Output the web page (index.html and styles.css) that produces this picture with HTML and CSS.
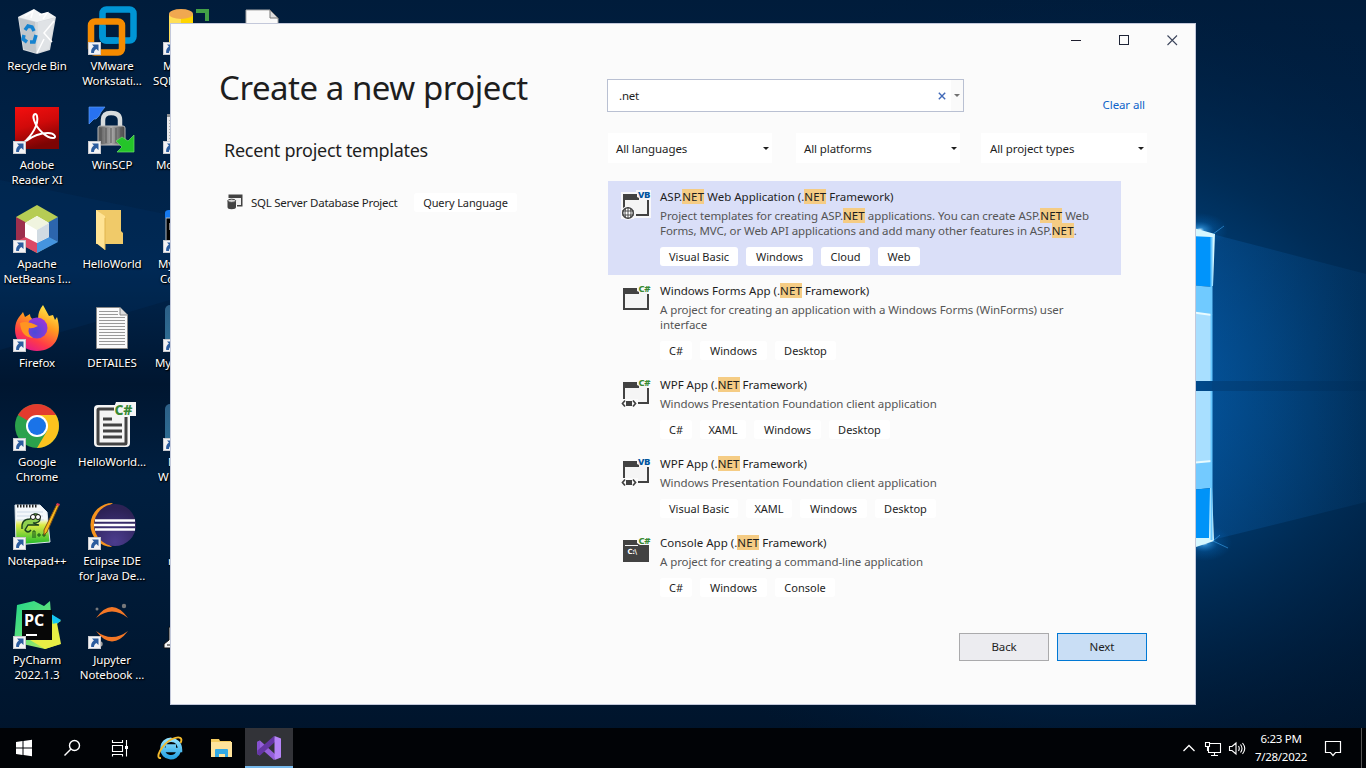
FILE: index.html
```html
<!DOCTYPE html>
<html lang="en">
<head>
<meta charset="utf-8">
<title>Create a new project</title>
<link rel="stylesheet" href="styles.css">
</head>
<body>
<svg class="defs" width="0" height="0">
  <defs>
    <linearGradient id="adobe" x1="0" y1="0" x2="0.3" y2="1"><stop offset="0" stop-color="#f50f0f"/><stop offset="0.5" stop-color="#d00a0a"/><stop offset="1" stop-color="#7c0404"/></linearGradient>
    <linearGradient id="steel" x1="0" y1="0" x2="1" y2="0"><stop offset="0" stop-color="#555"/><stop offset="0.5" stop-color="#aaa"/><stop offset="1" stop-color="#444"/></linearGradient>
    <linearGradient id="fox" x1="0.8" y1="0" x2="0.3" y2="1"><stop offset="0" stop-color="#fff44f"/><stop offset="0.4" stop-color="#ff9a1f"/><stop offset="0.75" stop-color="#ff3b47"/><stop offset="1" stop-color="#e3188d"/></linearGradient>
    <linearGradient id="npp" x1="0" y1="0" x2="0" y2="1"><stop offset="0.35" stop-color="#f4f8fb"/><stop offset="0.5" stop-color="#dcea45"/><stop offset="1" stop-color="#18b929"/></linearGradient>
    <linearGradient id="pyc" x1="0" y1="0" x2="1" y2="1"><stop offset="0" stop-color="#21d789"/><stop offset="0.5" stop-color="#5fe07b"/><stop offset="1" stop-color="#e9f44b"/></linearGradient>
    <linearGradient id="ie" x1="0" y1="0" x2="0" y2="1"><stop offset="0" stop-color="#8fe0ff"/><stop offset="1" stop-color="#2ba6e4"/></linearGradient>
    <linearGradient id="mysql" x1="0" y1="0" x2="0" y2="1"><stop offset="0" stop-color="#2c5f86"/><stop offset="1" stop-color="#2f7096"/></linearGradient>
    <radialGradient id="ecl" cx="0.5" cy="0.9" r="0.8"><stop offset="0" stop-color="#4b3c8e"/><stop offset="1" stop-color="#2c2255"/></radialGradient>
    <radialGradient id="foxcore" cx="0.4" cy="0.7" r="0.7"><stop offset="0" stop-color="#4a4ad8"/><stop offset="1" stop-color="#9a35d8"/></radialGradient>
    <symbol id="arrow" viewBox="0 0 13 13"><rect width="13" height="13" fill="#f3f3f5"/><rect x="0.5" y="0.5" width="12" height="12" fill="none" stroke="#c9cacf"/><path d="M4 2.5H10.5V9L8.4 7C6.8 8 6 9.4 6 11H3.2C2.8 8 3.8 6 5.9 4.5Z" fill="#2b5c9e"/></symbol>
    <symbol id="win" viewBox="0 0 32 32"><path d="M4 8H28V28H4Z" fill="#f5f5f5"/><path d="M3 6H17V9L19 10V12H5V28H3Z" fill="#424242"/></symbol>
  </defs>
</svg>

<svg class="wallpaper" viewBox="0 0 1366 768" preserveAspectRatio="none">
  <defs>
    <radialGradient id="glow" gradientUnits="userSpaceOnUse" cx="1080" cy="385" r="520" gradientTransform="translate(0 77) scale(1 .8)"><stop offset="0" stop-color="#0060b0"/><stop offset="0.22" stop-color="#004a8c"/><stop offset="0.38" stop-color="#003d74" stop-opacity=".95"/><stop offset="0.56" stop-color="#002e59" stop-opacity=".85"/><stop offset="1" stop-color="#001a38" stop-opacity="0"/></radialGradient>
    <linearGradient id="base" x1="0" y1="0" x2="0" y2="1"><stop offset="0" stop-color="#001c3b"/><stop offset="0.35" stop-color="#00264f"/><stop offset="0.5" stop-color="#001630"/><stop offset="0.62" stop-color="#001f40"/><stop offset="1" stop-color="#001329"/></linearGradient>
    <linearGradient id="beam" x1="0" y1="0" x2="1" y2="0"><stop offset="0" stop-color="#0a5fae" stop-opacity=".35"/><stop offset="1" stop-color="#0a5aa0" stop-opacity=".12"/></linearGradient>
    <radialGradient id="flare"><stop offset="0" stop-color="#e8fbff"/><stop offset="0.15" stop-color="#40b0ff" stop-opacity=".6"/><stop offset="0.5" stop-color="#0a80e0" stop-opacity=".22"/><stop offset="1" stop-color="#0070d0" stop-opacity="0"/></radialGradient>
  </defs>
  <rect width="1366" height="768" fill="url(#base)"/>
  <rect width="1366" height="768" fill="url(#glow)"/>
  <path d="M1212 234L1366 274V502L1212 540Z" fill="url(#beam)"/>
  <path d="M1212 381H1366V391H1212Z" fill="#002a55" opacity=".3"/>
  <path d="M0 180L170 215V300L0 350Z" fill="#00386e" opacity=".2"/>
  <ellipse cx="1200" cy="230" rx="28" ry="17" fill="url(#flare)"/>
  <ellipse cx="1204" cy="543" rx="28" ry="18" fill="url(#flare)"/>
  <path d="M1190 236H1212V287L1190 285Z" fill="#0094fb"/>
  <path d="M1190 285L1212 287V316L1190 313Z" fill="#70caff"/>
  <path d="M1190 314H1212V381H1190ZM1190 391H1212V461L1190 463Z" fill="#a8dfff"/>
  <path d="M1190 463L1212 461V488L1190 490Z" fill="#73caff"/>
  <path d="M1190 490L1212 488V540H1190Z" fill="#0093f8"/>
  <path d="M1190 312L1212 315M1190 463L1212 461" stroke="#e8fbff" stroke-width="2"/>
  <path d="M1190 227L1215 234L1213 286H1211L1211 237L1190 236ZM1190 549L1214 541L1212 488H1210L1209 538H1190Z" fill="#d5f7ff"/>
  <path d="M1211.500 237V381M1211.500 391V540" stroke="#68c8ff" stroke-width="2"/>
  <path d="M1213 234L1224 226M1213 541L1228 548M1213 541L1220 535" stroke="#3aa4f0" stroke-width="1" opacity=".6"/>
</svg>

<main class="desktop">
  <div class="shortcut"><svg class="art" viewBox="0 0 48 48"><path d="M5 9L43 9L37 42L24 46L10 42Z" fill="#d5d9dd"/><path d="M5 9L24 14L43 9L35 4L29 6L21 1L13 5Z" fill="#f2f4f5"/><path d="M6 10L22 14L23 45L11 41Z" fill="#c0c6cb"/><path d="M25 14L42 10L36 41L24 45Z" fill="#e0e3e6"/><path d="M12 8L20 3L18 10M26 7L34 5L30 11M41 13L31 25L39 34M24 45L31 31" stroke="#fff" fill="none" stroke-width="1.500"/><path d="M12 22L15 18L19 19L21 23M23 27L21 34L17 34M14 34L10 31L11 27" fill="none" stroke="#1583d0" stroke-width="3.500"/></svg><p>Recycle Bin</p></div>
  <div class="shortcut"><svg class="art" viewBox="0 0 48 48"><rect x="14.500" y="1.500" width="31" height="31" rx="4" fill="none" stroke="#0095d5" stroke-width="6.500"/><rect x="3" y="13.500" width="31" height="31" rx="4" fill="none" stroke="#f58b00" stroke-width="6.500"/><path d="M14.500 18V28.500Q14.500 32.500 18.500 32.500H29" fill="none" stroke="#0095d5" stroke-width="6.500"/></svg><svg class="link"><use href="#arrow"/></svg><p>VMware<br>Workstati...</p></div>
  <div class="shortcut cut cut-14"><svg class="art" viewBox="0 0 48 48"><path d="M6 6V40H30V6Z" fill="#ffd500"/><path d="M6 6V40H18V6Z" fill="#ffdf57"/><ellipse cx="18" cy="6" rx="12" ry="5" fill="#f0a850"/><path d="M33 1H46V13H42V5H33Z" fill="#43a047"/></svg><svg class="link"><use href="#arrow"/></svg><p>M<br><span class="back10">SQL</span></p></div>
  <div class="shortcut"><svg class="art" viewBox="0 0 48 48"><path d="M8 2H32L40 10V44H8Z" fill="#fafafa" stroke="#aaa"/><path d="M32 2V10H40Z" fill="#ddd" stroke="#777"/></svg></div>

  <div class="shortcut"><svg class="art" viewBox="0 0 48 48"><rect x="2" y="0" width="44" height="42" fill="url(#adobe)"/><path d="M10 36C19 29 26 17 24 9C23 5 19 7 21 13C24 23 34 31 40 31C44 31 42 26 35 26C26 26 17 31 13 34" stroke="#fff" stroke-width="2" fill="none"/></svg><svg class="link"><use href="#arrow"/></svg><p>Adobe<br>Reader XI</p></div>
  <div class="shortcut"><svg class="art" viewBox="0 0 48 48"><path d="M15 20V13Q15 6 23 6Q32 6 32 13V20" fill="none" stroke="#d8dcdd" stroke-width="4.500"/><rect x="10" y="19" width="27" height="19" rx="2" fill="url(#steel)" stroke="#bbb"/><path d="M13 21V36M18 21V36M23 21V36M28 21V36M33 21V36" stroke="#555" stroke-width="1"/><path d="M1 0L17 0L13 5L11 9L8 12L6 12L1 17Z" fill="#2872f0" stroke="#5a9cf6" stroke-width=".7"/><path d="M46 28V45H29L34 40L28 34L34 30L40 34Z" fill="#24c529" stroke="#6be06b" stroke-width=".7"/></svg><svg class="link"><use href="#arrow"/></svg><p>WinSCP</p></div>
  <div class="shortcut cut cut-6"><svg class="art" viewBox="0 0 48 48"><path d="M4 7H40V40H4Z" fill="#e8e8ea"/><path d="M4 7H40V10H4Z" fill="#8b8e92"/><path d="M7 13V36" stroke="#777" stroke-dasharray="1 2"/></svg><svg class="link"><use href="#arrow"/></svg><p>Mo</p></div>
  <i></i>

  <div class="shortcut"><svg class="art" viewBox="0 0 48 48"><path d="M24 -1L45 11V35L24 47L3 35V11Z" fill="#b6cc54"/><path d="M3 11L14 17V31L3 36Z" fill="#9d2f4d"/><path d="M45 11L34 17V31L45 36Z" fill="#2c65ad"/><path d="M3 36L14 30L24 36V47Z" fill="#dc4966"/><path d="M45 36L34 30L24 36V47Z" fill="#4594df"/><path d="M24 10L36 17V31L24 37L12 31V17Z" fill="#fff"/><path d="M12 17L24 10L36 17L24 24Z" fill="#f0f4df"/><path d="M24 24L36 17V31L24 37Z" fill="#d1dbe3"/></svg><svg class="link"><use href="#arrow"/></svg><p>Apache<br>NetBeans I...</p></div>
  <div class="shortcut"><svg class="art" viewBox="0 0 48 48"><path d="M8 4H33V25L35 27V38H8Z" fill="#f0ca69"/><path d="M8 4L17 10V44L8 37Z" fill="#ffe394"/><path d="M17 12V44" stroke="#dfb44e"/></svg><p>HelloWorld</p></div>
  <div class="shortcut cut cut-8"><svg class="art" viewBox="0 0 48 48"><path d="M2 7Q2 4 6 4H40V12H2Z" fill="#167af0"/><path d="M3 12H40V40H3Z" fill="#000" stroke="#b4bac0"/><path d="M7 24V17H10V24" stroke="#fff" fill="none"/></svg><svg class="link"><use href="#arrow"/></svg><p>My<br><span class="fwd2">Co</span></p></div>
  <i></i>

  <div class="shortcut"><svg class="art" viewBox="0 0 48 48"><path d="M30 0L36 11L40 10L42 15L44 12C50 31 42 46 24 46C8 46-1 32 3 18C5 12 8 10 10 7L12 12L17 9Q17 13 21 15L25 14Q25 6 30 0Z" fill="url(#fox)"/><circle cx="24" cy="23" r="10.500" fill="url(#foxcore)"/><path d="M7 18Q14 15 25 21Q19 24 16 23Q14 29 20 33Q8 32 7 18Z" fill="#ff9421"/></svg><svg class="link"><use href="#arrow"/></svg><p>Firefox</p></div>
  <div class="shortcut"><svg class="art" viewBox="0 0 48 48"><path d="M8.500 2.500H32L39.500 10V43.500H8.500Z" fill="#fafafa" stroke="#888"/><path d="M32 2.500V10H39.500" fill="#ddd" stroke="#888"/><path d="M11 6.500H30M11 9.500H30M11 12.500H37M11 15.500H37M11 18.500H37M11 21.500H37M11 24.500H37M11 27.500H37M11 30.500H37M11 33.500H37M11 36.500H37M11 39.500H37" stroke="#999"/></svg><p>DETAILES</p></div>
  <div class="shortcut cut cut-5"><svg class="art" viewBox="0 0 48 48"><rect x="2" y="0" width="44" height="44" rx="5" fill="url(#mysql)"/></svg><svg class="link"><use href="#arrow"/></svg><p>My</p></div>
  <i></i>

  <div class="shortcut"><svg class="art" viewBox="0 0 48 48"><circle cx="24" cy="22" r="22" fill="#2ba24c"/><path d="M24 22L5 11A22 22 0 0 1 43 11Z" fill="#e33b2e"/><path d="M24 11H43A22 22 0 0 1 24 44L34 27Z" fill="#fcc31e"/><circle cx="24" cy="22" r="11" fill="#fff"/><circle cx="24" cy="22" r="9" fill="#1a73e8"/></svg><svg class="link"><use href="#arrow"/></svg><p>Google<br>Chrome</p></div>
  <div class="shortcut"><svg class="art" viewBox="0 0 48 48"><rect x="6" y="1" width="36" height="42" rx="4" fill="#f5f5f5"/><path d="M28 5H11Q10 5 10 6V39Q10 40 11 40H37Q38 40 38 39V13" fill="none" stroke="#424242" stroke-width="3"/><path d="M15 15H24M15 21H34M15 27H34M15 33H34" stroke="#424242" stroke-width="3"/><path d="M28 -2H48V12H26V3Z" fill="#f5f5f5"/><text class="badge" x="26.500" y="10.500" font-size="14" fill="#388a34">C#</text></svg><p>HelloWorld...</p></div>
  <div class="shortcut cut cut-18"><svg class="art" viewBox="0 0 48 48"><rect x="2" y="0" width="44" height="44" rx="5" fill="url(#mysql)"/></svg><svg class="link"><use href="#arrow"/></svg><p>N<br><span class="back10">W</span></p></div>
  <i></i>

  <div class="shortcut"><svg class="art" viewBox="0 0 48 48"><path d="M2 2H27L34 9L37 39L3 42Z" fill="url(#npp)" stroke="#dfe7ed"/><path d="M4 3H25" stroke="#222" stroke-width="3" stroke-dasharray="1.500 1.500"/><path d="M4 9H30M4 13H30M4 17H31" stroke="#ccd9e7"/><path d="M9 26Q8 16 17 16L21 11Q27 10 27 16Q27 20 20 20L26 22H15L12 27Q15 31 18 27" fill="#8ecf4e" stroke="#173d1d" stroke-width="1.300"/><circle cx="20" cy="14" r="2.500" fill="#fff" stroke="#111"/><circle cx="25" cy="14" r="2.500" fill="#fff" stroke="#111"/><path d="M20 35V28H22V35M24 32H28M26 30V34M29 32H33M31 30V34" fill="none" stroke="#175218"/><path d="M44 1L46 2L34 29L31 32L31 27Z" fill="#f8b91c" stroke="#805016"/><path d="M44 0L47 1L46 3L43 2Z" fill="#d35"/></svg><svg class="link"><use href="#arrow"/></svg><p>Notepad++</p></div>
  <div class="shortcut"><svg class="art" viewBox="0 0 48 48"><path d="M25 0A22 22 0 1 0 24 44A27 27 0 0 1 25 0Z" fill="#f7941e"/><circle cx="27" cy="22" r="21" fill="url(#ecl)"/><path d="M7 17.500H47M6 22H47M7 26.500H47" stroke="#fff" stroke-width="2.400"/></svg><svg class="link"><use href="#arrow"/></svg><p>Eclipse IDE<br>for Java De...</p></div>
  <div class="shortcut cut cut-19"><span class="art"></span><p>n</p></div>
  <i></i>

  <div class="shortcut"><svg class="art" viewBox="0 0 48 48"><path d="M4 3L21 -1L31 4L37 -1L38 12L48 19L43 22L47 42L32 47L14 43L1 40Z" fill="url(#pyc)"/><path d="M38 12L48 18L41 25Z" fill="#14c6f3"/><path d="M39 22L44 21L48 42L32 47L17 38Z" fill="#e8ee45"/><rect x="9" y="8" width="30" height="30" fill="#070707"/><path d="M13 33H24" stroke="#fff" stroke-width="2"/></svg><span class="pc">PC</span><svg class="link"><use href="#arrow"/></svg><p>PyCharm<br>2022.1.3</p></div>
  <div class="shortcut"><svg class="art" viewBox="0 0 48 48"><path d="M8 16Q24 -6 40 16Q24 3 8 16ZM8 29Q24 50 40 29Q24 41 8 29Z" fill="#f37726"/><circle cx="36" cy="4" r="2.200" fill="#77787b"/><circle cx="9" cy="7" r="1.500" fill="#77787b"/><circle cx="12" cy="42" r="2.700" fill="#9e9e9e"/></svg><svg class="link"><use href="#arrow"/></svg><p>Jupyter<br>Notebook ...</p></div>
  <div class="shortcut cut"><svg class="art" viewBox="0 0 48 48"><path d="M1 46V42L6 38V25H40V46Z" fill="#f4f4f4" stroke="#111"/><path d="M4 43H20" stroke="#111"/></svg></div>
  <i></i>
</main>

<section class="dialog">
  <header class="caption">
    <svg class="cap" viewBox="0 0 48 32"><path d="M19 16.500H29" stroke="#1e1e2e"/></svg>
    <svg class="cap" viewBox="0 0 48 32"><rect x="19.500" y="11.500" width="9" height="9" fill="none" stroke="#1e2436"/></svg>
    <svg class="cap" viewBox="0 0 48 32"><path d="M19.500 11.500L29 21M29 11.500L19.500 21" stroke="#3d465c" stroke-width="1.100"/></svg>
  </header>
  <div class="columns">
    <div class="recent">
      <h1>Create a new project</h1>
      <h2>Recent project templates</h2>
      <div class="recent-row">
        <svg class="db" viewBox="0 0 16 16"><path d="M1.500 0.500H15.500V12.500H10V11H14V4H1.500Z" fill="#424242"/><path d="M2.500 4H14V11H9V6H2.500Z" fill="#f0f0f0"/><path d="M0.500 7V13Q0.500 15.200 4.500 15.200Q9 15.200 9 13V7Z" fill="#424242"/><ellipse cx="4.700" cy="6.800" rx="4" ry="1.600" fill="#d8d8d8" stroke="#424242"/></svg>
        <span class="recent-name">SQL Server Database Project</span>
        <span class="tag t-query">Query Language</span>
      </div>
    </div>
    <div class="results">
      <div class="search-row">
        <div class="search"><span class="query">.net</span>
          <svg class="clear" viewBox="0 0 8 8"><path d="M0.800 0.800L7.200 7.200M7.200 0.800L0.800 7.200" stroke="#4169b8" stroke-width="1.400"/></svg>
          <span class="drop"><svg class="caret" viewBox="0 0 6 3"><path d="M0 0H6L3 3Z" fill="#717171"/></svg></span></div>
        <a class="clear-all">Clear all</a>
      </div>
      <div class="filters">
        <div class="filter"><span>All languages</span><svg class="caret" viewBox="0 0 6 3"><path d="M0 0H6L3 3Z" fill="#1e1e1e"/></svg></div>
        <div class="filter"><span>All platforms</span><svg class="caret" viewBox="0 0 6 3"><path d="M0 0H6L3 3Z" fill="#1e1e1e"/></svg></div>
        <div class="filter wide"><span>All project types</span><svg class="caret" viewBox="0 0 6 3"><path d="M0 0H6L3 3Z" fill="#1e1e1e"/></svg></div>
      </div>
      <div class="list">
        <article class="item selected">
          <svg class="icon" viewBox="0 0 32 32"><path d="M1 4H16V2H31V30H14V31H1Z" fill="#f7f7fa"/><use href="#win" width="32" height="32"/><path d="M27 12H29V28H16V26H27Z" fill="#424242"/><text class="badge" x="18" y="10" font-size="9.500" fill="#00539c">VB</text><circle cx="8" cy="25" r="7" fill="#f7f7fa"/><circle cx="8" cy="25" r="5.300" fill="#fff" stroke="#424242" stroke-width="1.500"/><path d="M2 23H14M2 27H14M8 19V31M5.500 20Q4.500 25 5.500 30M10.500 20Q11.500 25 10.500 30" stroke="#424242" fill="none" stroke-width=".9"/></svg>
          <div class="body"><h3>ASP.<mark>NET</mark> Web Application (.<mark>NET</mark> Framework)</h3>
          <p>Project templates for creating ASP.<mark>NET</mark> applications. You can create ASP.<mark>NET</mark> Web<br>Forms, MVC, or Web API applications and add many other features in ASP.<mark>NET</mark>.</p>
          <div class="tags"><span class="tag t-vb">Visual Basic</span><span class="tag t-win">Windows</span><span class="tag t-cloud">Cloud</span><span class="tag t-web">Web</span></div></div>
        </article>
        <article class="item">
          <svg class="icon" viewBox="0 0 32 32"><use href="#win" width="32" height="32"/><path d="M27 12H29V28H3V26H27Z" fill="#424242"/><text class="badge" x="18.500" y="10" font-size="9.500" fill="#388a34">C#</text></svg>
          <div class="body"><h3>Windows Forms App (.<mark>NET</mark> Framework)</h3>
          <p>A project for creating an application with a Windows Forms (WinForms) user<br>interface</p>
          <div class="tags"><span class="tag t-cs">C#</span><span class="tag t-win">Windows</span><span class="tag t-desk">Desktop</span></div></div>
        </article>
        <article class="item">
          <svg class="icon" viewBox="0 0 32 32"><use href="#win" width="32" height="32"/><path d="M27 12H29V28H18V26H27Z" fill="#424242"/><path d="M1 23H18V31H1Z" fill="#fbfbfb"/><path d="M5 24.500L2.500 27.500L5 30.500M13 24.500L15.500 27.500L13 30.500" fill="none" stroke="#424242" stroke-width="1.700"/><path d="M6 25H12V30H6Z" fill="#424242"/><text class="badge" x="18.500" y="10" font-size="9.500" fill="#388a34">C#</text></svg>
          <div class="body"><h3>WPF App (.<mark>NET</mark> Framework)</h3>
          <p>Windows Presentation Foundation client application</p>
          <div class="tags"><span class="tag t-cs">C#</span><span class="tag t-xaml">XAML</span><span class="tag t-win">Windows</span><span class="tag t-desk">Desktop</span></div></div>
        </article>
        <article class="item">
          <svg class="icon" viewBox="0 0 32 32"><use href="#win" width="32" height="32"/><path d="M27 12H29V28H18V26H27Z" fill="#424242"/><path d="M1 23H18V31H1Z" fill="#fbfbfb"/><path d="M5 24.500L2.500 27.500L5 30.500M13 24.500L15.500 27.500L13 30.500" fill="none" stroke="#424242" stroke-width="1.700"/><path d="M6 25H12V30H6Z" fill="#424242"/><text class="badge" x="18" y="10" font-size="9.500" fill="#00539c">VB</text></svg>
          <div class="body"><h3>WPF App (.<mark>NET</mark> Framework)</h3>
          <p>Windows Presentation Foundation client application</p>
          <div class="tags"><span class="tag t-vb">Visual Basic</span><span class="tag t-xaml">XAML</span><span class="tag t-win">Windows</span><span class="tag t-desk">Desktop</span></div></div>
        </article>
        <article class="item">
          <svg class="icon" viewBox="0 0 32 32"><path d="M3 6H17V9L20 11H29V28H3Z" fill="#424242"/><path d="M5 11.500H18" stroke="#f5f5f5"/><text class="prompt" x="7.500" y="20" font-size="7" fill="#fff">C:\</text><text class="badge" x="18.500" y="10" font-size="9.500" fill="#388a34">C#</text></svg>
          <div class="body"><h3>Console App (.<mark>NET</mark> Framework)</h3>
          <p>A project for creating a command-line application</p>
          <div class="tags"><span class="tag t-cs">C#</span><span class="tag t-win">Windows</span><span class="tag t-con">Console</span></div></div>
        </article>
      </div>
      <footer class="actions"><button class="btn">Back</button><button class="btn primary">Next</button></footer>
    </div>
  </div>
</section>

<nav class="taskbar">
  <svg class="task" viewBox="0 0 48 40"><path d="M16 14L22.500 13V19.500H16ZM23.500 12.900L32 11.700V19.500H23.500ZM16 20.500H22.500V27L16 26ZM23.500 20.500H32V28.300L23.500 27.100Z" fill="#fff"/></svg>
  <svg class="task" viewBox="0 0 48 40"><circle cx="26.500" cy="17.500" r="5" fill="none" stroke="#fff" stroke-width="1.400"/><path d="M23 21L16.500 27.500" stroke="#fff" stroke-width="1.500"/></svg>
  <svg class="task" viewBox="0 0 48 40"><path d="M16.500 12V14.500H26.500V12M16.500 17.500H26.500V23.500H16.500ZM16.500 28.500V26.500H26.500V28.500M30.500 12V28.500" fill="none" stroke="#fff" stroke-width="1.100"/><path d="M29 18H32V21H29Z" fill="#fff"/></svg>
  <svg class="task" viewBox="0 0 48 40"><path d="M33.500 23.500C31.500 31.500 17.500 31.500 17.500 20.500C17.500 9 35 8.500 35 22H19.500M20.500 18.500H31" fill="none" stroke="url(#ie)" stroke-width="4.500"/><path d="M16 30C9 31 17 16 27 11C35 7.500 38 10 35.500 15" fill="none" stroke="#f2b92d" stroke-width="1.900"/></svg>
  <svg class="task" viewBox="0 0 48 40"><path d="M16 11H24L25 13H36V28H16Z" fill="#f5cc60"/><path d="M16 14H37V29H16Z" fill="#ffe39b"/><path d="M20 29V22Q20 21 21 21H32Q33 21 33 22V29H30V26H24V29Z" fill="#33aae5"/></svg>
  <span class="active"><svg class="task" viewBox="0 0 48 40"><path d="M12 14L15 12.500L31 27L29 32L12.500 17.500Z" fill="#9560db"/><path d="M12 14L15 12.500V27.500L12 26Z" fill="#8650cf"/><path d="M12 26L15 27.500L31 13L29 8L12.500 22.500Z" fill="#6436a3"/><path d="M29.500 8L36 10.500V29.500L29.500 32Z" fill="#b684f7"/></svg></span>
  <div class="tray">
    <svg class="chev" viewBox="0 0 14 20"><path d="M1.500 13L7 7.500L12.500 13" fill="none" stroke="#fff" stroke-width="1.300"/></svg>
    <svg class="net" viewBox="0 0 18 20"><path d="M6 5.500H16.500V14.500H4.500V9M10.500 14.500V17.500M7 17.500H14M1.500 4.500H5.500V8.500H1.500ZM3.500 9V13" fill="none" stroke="#fff" stroke-width="1.100"/></svg>
    <svg class="vol" viewBox="0 0 18 20"><path d="M1.500 8.500H4L8 5V16L4 12.500H1.500ZM10.500 8Q12 10.500 10.500 13M12.500 6.500Q15.500 10.500 12.500 14.500M14.500 5Q19 10.500 14.500 16" fill="none" stroke="#fff" stroke-width="1.100"/></svg>
    <div class="clock"><span>6:23 PM</span><span>7/28/2022</span></div>
    <svg class="note" viewBox="0 0 18 20"><path d="M1.500 3.500H16.500V14.500H11.500L9 17.500L6.500 14.500H1.500Z" fill="none" stroke="#fff" stroke-width="1.200"/></svg>
  </div>
</nav>
</body>
</html>
```
FILE: styles.css
```css
* { box-sizing: border-box; }
body { margin: 0; width: 1366px; height: 768px; overflow: hidden; background: #001a38; font-family: "Noto Sans", "Open Sans", sans-serif; font-size: 11.5px; color: #1e1e1e; }
h1, h2, h3, p { margin: 0; font-weight: 400; }
svg { display: block; flex: none; }
.defs { position: absolute; }
.wallpaper { position: absolute; left: 0; top: 0; width: 1366px; height: 768px; }

.desktop { position: absolute; left: -1px; top: 8px; display: grid; grid-template-columns: repeat(4, 75px); grid-auto-rows: 99px; }
.shortcut { position: relative; display: flex; flex-direction: column; align-items: center; }
.art { display: block; width: 48px; height: 48px; overflow: visible; }
.link { position: absolute; left: 14px; top: 34px; width: 13px; height: 13px; }
.shortcut p { margin-top: 2px; padding-left: 1px; color: #fff; line-height: 15px; letter-spacing: -.1px; text-align: center; white-space: nowrap; text-shadow: 1px 1px 1px #000, 0 1px 2px #000; }
.cut p { align-self: flex-start; text-align: left; }
.cut-14 p { margin-left: 13px; }
.cut-6 p { margin-left: 6px; }
.cut-8 p { margin-left: 8px; }
.cut-5 p { margin-left: 5px; }
.cut-18 p { margin-left: 18px; }
.cut-19 p { margin-left: 18px; }
.back10 { margin-left: -10px; }
.fwd2 { margin-left: 2px; }
.pc { position: absolute; left: 25px; top: 9px; color: #fff; font: 700 16px/19px "Open Sans", sans-serif; }
.badge { font-family: "Noto Sans", sans-serif; font-weight: 800; letter-spacing: -.3px; }
.prompt { font-family: "DejaVu Sans", sans-serif; font-weight: 700; letter-spacing: -.5px; }

.dialog { position: absolute; left: 170px; top: 23px; width: 1026px; height: 682px; background: #fbfbfb; border: 1px solid #c3c8da; }
.caption { display: flex; justify-content: flex-end; height: 32px; margin-right: -1px; }
.cap { width: 48px; height: 32px; }
.columns { display: flex; padding-left: 48px; }
.recent { width: 388px; padding-top: 6px; }
h1 { font: 400 33px/52px "Noto Sans", sans-serif; letter-spacing: -.47px; white-space: nowrap; }
h2 { margin: 22px 0 0 5px; font-size: 18px; line-height: 28px; letter-spacing: -.28px; white-space: nowrap; }
.recent-row { display: flex; align-items: center; height: 20px; margin: 28px 0 0 8px; }
.db { width: 16px; height: 16px; }
.recent-name { width: 163px; margin-left: 8px; letter-spacing: -.26px; white-space: nowrap; }

.results { width: 540px; padding-top: 23px; }
.search-row { display: flex; justify-content: space-between; height: 33px; }
.search { display: flex; align-items: center; width: 357px; height: 33px; background: #fff; border: 1px solid #b9c0d2; }
.query { flex: 1; padding-left: 11px; letter-spacing: -.2px; }
.clear { width: 8px; height: 8px; margin-right: 5px; }
.drop { display: flex; align-items: center; justify-content: center; width: 12px; height: 31px; background: #fafafa; }
.caret { width: 6px; height: 3px; }
.clear-all { padding: 18px 2px 0 0; line-height: 16px; letter-spacing: -.1px; color: #0e63c9; }
.filters { display: flex; margin: 21px 0 0 1px; }
.filter { display: flex; align-items: center; justify-content: space-between; width: 164px; height: 30px; margin-right: 24px; padding: 0 3px 0 8px; background: #fff; letter-spacing: -.1px; }
.filter.wide { width: 166px; margin: 0 0 0 -3px; padding-left: 9px; }
.list { margin: 18px 0 0 1px; }
.item { display: flex; width: 513px; padding: 8px 0 9px 12px; }
.selected { background: #dadff8; }
.icon { width: 32px; height: 32px; margin-top: -1px; overflow: visible; }
.body { padding-left: 8px; white-space: nowrap; }
h3 { font-size: 11.5px; line-height: 16px; }
.item p { margin-top: 3px; line-height: 15px; letter-spacing: -.08px; color: #555; }
mark { background: #f5cc84; color: #1e1e1e; letter-spacing: .15px; }
.tags { display: flex; gap: 8px; margin-top: 9px; }
.tag { height: 19px; border-radius: 3px; background: #fff; font-size: 11px; line-height: 19px; text-align: center; white-space: nowrap; }
.t-query { width: 103px; letter-spacing: -.1px; }
.t-vb { width: 78px; }
.t-win { width: 67px; }
.t-cloud { width: 49px; }
.t-web { width: 42px; }
.t-cs { width: 32px; }
.t-desk { width: 61px; }
.t-xaml { width: 46px; }
.t-con { width: 60px; }
.actions { display: flex; justify-content: flex-end; gap: 8px; margin-top: 27px; }
.btn { width: 90px; height: 28px; padding: 0 0 2px; border: 1px solid #aaaaac; background: #ececf0; color: #1e1e1e; font: inherit; letter-spacing: -.1px; }
.primary { border-color: #0078d4; background: #c9def5; }

.taskbar { position: absolute; left: 0; top: 728px; display: flex; width: 1366px; height: 40px; background: #010306; }
.task { width: 48px; height: 40px; }
.taskbar > .task:nth-child(4), .taskbar > .task:nth-child(5) { width: 50px; }
.active { width: 48px; height: 40px; margin-left: 1px; background: #323338; border-bottom: 2px solid #76b9ed; }
.tray { display: flex; align-items: center; margin-left: auto; padding-right: 3px; border-right: 1px solid #555; margin-right: 4px; color: #fff; }
.chev { width: 14px; height: 20px; margin-right: 8px; }
.net { width: 18px; height: 20px; margin-right: 6px; }
.vol { width: 18px; height: 20px; margin-right: 9px; }
.clock { display: flex; flex-direction: column; align-items: center; width: 52px; line-height: 18px; letter-spacing: -.28px; white-space: nowrap; }
.note { width: 18px; height: 20px; margin: 0 16px 0 17px; }
```
